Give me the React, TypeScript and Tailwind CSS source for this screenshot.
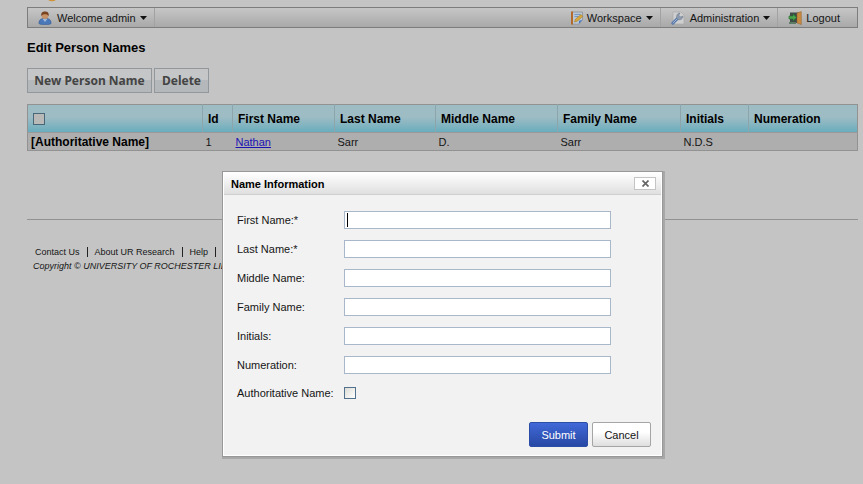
import React from "react";

const fields = [
  { id: "firstName", label: "First Name:*" },
  { id: "lastName", label: "Last Name:*" },
  { id: "middleName", label: "Middle Name:" },
  { id: "familyName", label: "Family Name:" },
  { id: "initials", label: "Initials:" },
  { id: "numeration", label: "Numeration:" },
];

const headers = ["Id", "First Name", "Last Name", "Middle Name", "Family Name", "Initials", "Numeration"];

function UserIcon() {
  return (
    <svg width="14" height="14" viewBox="0 0 14 14" aria-hidden="true">
      <path d="M1 12.2C1 8.800 3 7.400 7 7.400s6 1.400 6 4.800c0 1-2 1.400-6 1.400s-6-.4-6-1.400z" fill="#4a78b8" stroke="#3a5f96" strokeWidth=".7" />
      <path d="M4.600 8L7 11l2.400-3z" fill="#9db9dc" />
      <circle cx="7" cy="4.800" r="3.200" fill="#c69265" />
      <path d="M3.300 5.200C2.800 2 4.600.6 7 .6s4.300 1.400 3.700 4.600C10 3.800 8.500 3.200 7 3.200s-3 .6-3.700 2z" fill="#7a4320" />
    </svg>
  );
}

function WorkspaceIcon() {
  return (
    <svg width="14" height="14" viewBox="0 0 14 14" aria-hidden="true">
      <path d="M2 1h10.500v8L9 13.200H2z" fill="#b9c6d6" stroke="#8c8f95" strokeWidth=".8" />
      <path d="M1 .6h2v13H1z" fill="#b26b2c" />
      <path d="M4.500 3.500h6M4.500 5.500h4" stroke="#6f92c2" strokeWidth=".9" />
      <path d="M4.500 11l1-3 5.500-4.500 1.800 1.800-5.500 4.900z" fill="#d9a83a" stroke="#9a7423" strokeWidth=".5" />
      <path d="M8.800 13l.3-3.300 3.300-.9z" fill="#4a78c0" />
    </svg>
  );
}

function WrenchIcon() {
  return (
    <svg width="14" height="14" viewBox="0 0 14 14" aria-hidden="true">
      <path d="M2 1h8l3 3v9H2z" fill="#cfcfcf" stroke="#a9a9a9" strokeWidth=".7" />
      <path d="M1.800 12.200L7 7" stroke="#5878a8" strokeWidth="3" strokeLinecap="round" />
      <path d="M2 12l4.700-4.700" stroke="#9db8da" strokeWidth="1" strokeLinecap="round" />
      <path d="M6 7.500C4.800 4.500 6.500 2 9 2L7.800 4.200 9.600 6l2.300-1c.2 2.800-2.400 4.500-5 3.500z" fill="#8d9bae" stroke="#697789" strokeWidth=".5" />
    </svg>
  );
}

function LogoutIcon() {
  return (
    <svg width="14" height="14" viewBox="0 0 14 14" aria-hidden="true">
      <path d="M2 1.500h9V12H2z" fill="#3f4a49" />
      <path d="M9 2l4.300-1.400v13L9 12z" fill="#c98a42" stroke="#95622a" strokeWidth=".5" />
      <path d="M1 5h4V2.800L8.600 6.500 5 10V8H1z" fill="#4aa34f" stroke="#216c2a" strokeWidth=".6" />
      <path d="M1 11h7v2H1z" fill="#5d7d67" />
    </svg>
  );
}

function Caret() {
  return (
    <svg width="7" height="4" viewBox="0 0 7 4" className="ml-1" aria-hidden="true">
      <path d="M0 0h7L3.500 4z" fill="#111" />
    </svg>
  );
}

const menuItem = "flex h-full items-center text-[11px] text-[#151515]";
const toolButton =
  "h-[25px] border border-[#92979b] bg-linear-to-b from-[#c5c6c7] from-50% to-[#b4b8ba] to-50% text-center";

export default function App() {
  return (
    <div className="relative min-h-screen bg-[#c4c4c4] font-['Liberation_Sans',Arial,sans-serif] text-[11px] leading-4 text-[#151515]">
      <div className="pr-[5px] pl-[27px]">
        <header className="h-[7px] pl-[21px]">
          <svg width="8" height="2" viewBox="0 0 8 2" aria-hidden="true">
            <path d="M0 0h8Q4 2.500 0 0z" fill="#cf9238" />
          </svg>
        </header>

        <nav className="flex h-[21px] items-center border border-[#7d7d7d] bg-linear-to-b from-[#c6c6c6] to-[#a9a9a9]">
          <button className={menuItem + " gap-[5px] border-r border-[#a2a2a2] pr-[7px] pl-[10px]"}>
            <UserIcon />
            <span className="flex items-center">Welcome admin<Caret /></span>
          </button>
          <div className="ml-auto flex h-full">
            <button className={menuItem + " gap-[3px] border-r border-[#a2a2a2] pr-[7px] pl-2"}>
              <WorkspaceIcon />
              <span className="flex items-center">Workspace<Caret /></span>
            </button>
            <button className={menuItem + " gap-[5px] border-r border-[#a2a2a2] pr-[7px] pl-[10px]"}>
              <WrenchIcon />
              <span className="flex items-center">Administration<Caret /></span>
            </button>
            <a href="#logout" className={menuItem + " gap-1 pr-[17px] pl-[10px]"}>
              <LogoutIcon />
              Logout
            </a>
          </div>
        </nav>

        <main>
          <h1 className="mt-3 text-[13px] leading-4 font-bold text-black">Edit Person Names</h1>

          <div className="mt-3 flex gap-[2px] font-['Noto_Sans',Verdana,sans-serif] text-[12px] font-bold text-[#444]">
            <button className={toolButton + " w-[125px]"}>New Person Name</button>
            <button className={toolButton + " w-[55px]"}>Delete</button>
          </div>

          <table className="mt-[11px] w-full table-fixed border-collapse border border-[#929292] text-left">
            <colgroup>
              <col className="w-[175px]" />
              <col className="w-[30px]" />
              <col className="w-[102px]" />
              <col className="w-[101px]" />
              <col className="w-[122px]" />
              <col className="w-[123px]" />
              <col className="w-[68px]" />
              <col />
            </colgroup>
            <thead>
              <tr className="h-[28px] border-b border-[#999] bg-linear-to-b from-[#9dbcc4] from-45% to-[#69adbd] text-[12px] text-black">
                <th className="p-0 pl-[5px]">
                  <input type="checkbox" aria-label="Select all names" className="block size-3 appearance-none border border-[#486779] bg-[#b9b9b7]" />
                </th>
                {headers.map((h) => (
                  <th key={h} className="border-l border-[#8da5aa] p-0 pl-[5px] font-bold">{h}</th>
                ))}
              </tr>
            </thead>
            <tbody>
              <tr className="h-[18px] bg-[#aeaeae]">
                <td className="p-0 pl-[3px] text-[12px] font-bold text-black">[Authoritative Name]</td>
                <td className="p-0 pl-[3px]">1</td>
                <td className="p-0 pl-[3px]"><a href="#nathan" className="text-[#1b12b4] underline">Nathan</a></td>
                <td className="p-0 pl-[3px]">Sarr</td>
                <td className="p-0 pl-[3px]">D.</td>
                <td className="p-0 pl-[3px]">Sarr</td>
                <td className="p-0 pl-[3px]">N.D.S</td>
                <td className="p-0" />
              </tr>
            </tbody>
          </table>
        </main>

        <footer className="mt-[68px] border-t border-[#929292] pt-[25px] text-[9px] leading-[14px]">
          <div className="flex items-center pl-2">
            <a href="#contact">Contact Us</a>
            <span className="mx-[7px] h-[10px] w-px bg-[#222]" />
            <a href="#about">About UR Research</a>
            <span className="mx-[7px] h-[10px] w-px bg-[#222]" />
            <a href="#help">Help</a>
            <span className="mx-[7px] h-[10px] w-px bg-[#222]" />
          </div>
          <p className="pl-[6px] italic">Copyright © UNIVERSITY OF ROCHESTER LIBRARIES</p>
        </footer>
      </div>

      <div role="dialog" aria-labelledby="dialog-title" className="absolute top-[172px] left-[223px] w-[439px] border border-white bg-[#f2f2f2] shadow-[0_0_0_1px_#989898,1px_1px_0_2px_#a8a8a8]">
        <div className="flex h-[22px] items-center justify-between border-b border-[#cfcfcf] bg-linear-to-b from-white to-[#dfdfdf] pr-[5px] pl-[7px]">
          <h2 id="dialog-title" className="font-bold text-black">Name Information</h2>
          <button aria-label="Close" className="flex h-[13px] w-[22px] items-center justify-center border border-[#c4c4c4] bg-white">
            <svg width="7" height="7" viewBox="0 0 7 7" aria-hidden="true">
              <path d="M.5.5l6 6M6.500.5l-6 6" stroke="#666" strokeWidth="1.700" />
            </svg>
          </button>
        </div>
        <form className="pt-[16px] pr-[10px] pb-[8px] pl-[13px]" onSubmit={(e) => e.preventDefault()}>
          <div className="grid grid-cols-[107px_267px] items-center gap-y-[11px]">
            {fields.map((f, i) => (
              <React.Fragment key={f.id}>
                <label htmlFor={f.id}>{f.label}</label>
                <div className="flex h-[18px] items-center border border-[#a8b8ca] bg-white">
                  {i === 0 && <span className="ml-[2px] h-[14px] w-px bg-black" />}
                  <input id={f.id} type="text" className="h-4 w-full min-w-0 bg-transparent px-px outline-none" />
                </div>
              </React.Fragment>
            ))}
            <label htmlFor="authoritative" className="whitespace-nowrap">Authoritative Name:</label>
            <input id="authoritative" type="checkbox" className="size-3 appearance-none border border-[#53718c] bg-linear-to-br from-[#dcdcd7] to-white" />
          </div>
          <div className="mt-[21px] flex justify-end gap-1">
            <button type="submit" className="h-[25px] w-[59px] rounded-xs border border-[#2c4da6] bg-linear-to-b from-[#4169d8] to-[#2748a4] text-white">Submit</button>
            <button type="button" className="h-[25px] w-[59px] rounded-xs border border-[#a5a5a5] bg-linear-to-b from-white from-40% to-[#dedede]">Cancel</button>
          </div>
        </form>
      </div>
    </div>
  );
}
